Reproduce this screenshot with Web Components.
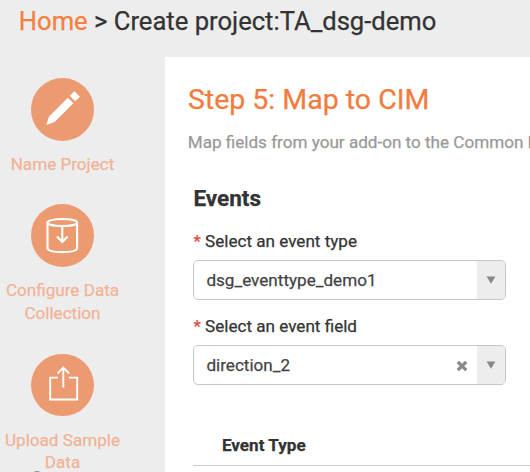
<!DOCTYPE html>
<html lang="en">
<head>
<meta charset="utf-8">
<title>Create project</title>
<style>
html, body { margin: 0; height: 100%; overflow: hidden; }
body { background: #ededed; font-family: Roboto, "Liberation Sans", sans-serif; font-size: 17.1px; color: #333; -webkit-text-stroke: .25px; }
</style>
</head>
<body>
<project-page></project-page>
<script>
function define(name, html) {
  const template = document.createElement('template');
  template.innerHTML = html;
  customElements.define(name, class extends HTMLElement {
    constructor() {
      super();
      this.attachShadow({ mode: 'open' }).appendChild(template.content.cloneNode(true));
    }
  });
}

define('page-crumbs', `
<style>
:host { display: block; box-sizing: border-box; height: 57px; padding: 6px 0 0 18.8px; font-size: 25.6px; line-height: 30px; white-space: nowrap; }
::slotted(a) { color: #f58040; text-decoration: none; }
</style>
<slot></slot>`);

define('wizard-step', `
<style>
:host { display: flex; flex: none; flex-direction: column; align-items: center; width: 125px; color: #f0b496; line-height: 22.6px; text-align: center; }
.disc { width: 62.6px; height: 62.6px; border-radius: 50%; background: #ec9b70; }
.label { margin-top: 12.3px; white-space: nowrap; }
::slotted(svg) { display: block; width: 62.6px; height: 62.6px; }
</style>
<div class="disc"><slot name="icon"></slot></div>
<div class="label"><slot></slot></div>`);

define('step-rail', `
<style>
:host { display: flex; flex-direction: column; position: relative; box-sizing: border-box; width: 165px; padding-top: 21.2px; overflow: hidden; }
::slotted(wizard-step:first-of-type) { height: 126.3px; }
::slotted(wizard-step:nth-of-type(2)) { height: 149.2px; }
.next { position: absolute; left: 33px; top: 414px; width: 8px; height: 8px; border-radius: 50%; background: #8a8a8a; }
</style>
<slot></slot><i class="next"></i>`);

define('select-box', `
<style>
:host { display: flex; box-sizing: border-box; width: 313px; height: 40px; border: 1px solid #c6c6c6; border-radius: 5px; overflow: hidden; background: #fff; color: #444; }
.value { flex: 1; padding-left: 12px; line-height: 38px; }
.arrow { width: 28px; background: #ededed; display: flex; align-items: center; justify-content: center; }
.arrow svg { width: 10px; height: 8px; }
::slotted(svg) { width: 12px; height: 12px; align-self: center; margin: 2px 9.5px 0 0; }
</style>
<span class="value"><slot></slot></span><slot name="clear"></slot>
<span class="arrow"><svg viewBox="0 0 10 8"><path d="M.6 .4h8.8L5 7.8z" fill="#888"/></svg></span>`);

define('form-field', `
<style>
:host { display: block; height: 85px; }
.label { line-height: 22px; height: 30px; }
b { color: #dc4e41; font-weight: 400; }
</style>
<div class="label"><b>*</b> <slot name="label"></slot></div><slot></slot>`);

define('table-head', `
<style>
:host { display: block; padding: 0 0 6.5px 28.5px; border-bottom: 1px solid #ccc; line-height: 25px; font-weight: 700; }
</style>
<slot></slot>`);

define('step-panel', `
<style>
:host { display: block; flex: 1; min-width: 0; box-sizing: border-box; background: #fff; padding-left: 28.4px; overflow: hidden; }
h1 { margin: 26px 0 0 -5.5px; font-size: 28.5px; font-weight: 400; line-height: 34px; color: #f27c3e; }
p { margin: 14px 0 0 -5.7px; line-height: 22px; color: #999; white-space: nowrap; }
h2 { margin: 31px 0 0; font-size: 22.5px; line-height: 28px; }
.fields { padding-top: 18px; }
::slotted(table-head) { margin-top: 33px; }
</style>
<h1><slot name="title"></slot></h1>
<p><slot name="intro"></slot></p>
<h2><slot name="section"></slot></h2>
<div class="fields"><slot></slot></div>
<slot name="table"></slot>`);

define('project-page', `
<style>
:host { display: flex; flex-direction: column; height: 472px; }
main { flex: 1; display: flex; min-height: 0; }
</style>
<page-crumbs><a>Home</a> &gt; Create project:TA_dsg-demo</page-crumbs>
<main>
  <step-rail>
    <wizard-step>
      <svg slot="icon" viewBox="0 0 62.6 62.6"><g transform="translate(15.2 46.9) rotate(-45)" fill="#fff"><path d="M0 0L8 -3.9H34.6V3.9H8z"/><path d="M37.2 -3.9H43.8V3.9H37.2z"/></g></svg>
      Name Project
    </wizard-step>
    <wizard-step>
      <svg slot="icon" viewBox="0 0 62.6 62.6" fill="none" stroke="#fff" stroke-width="2.1"><ellipse cx="31.3" cy="18.5" rx="14.8" ry="3.5"/><path d="M16.5 18.5V44.5C18 49.3 44.6 49.3 46.1 44.5V18.5M31.3 22V38M26 32.5l5.3 5.6 5.3-5.6"/></svg>
      Configure Data<br>Collection
    </wizard-step>
    <wizard-step>
      <svg slot="icon" viewBox="0 0 62.6 62.6" fill="none" stroke="#fff" stroke-width="1.9"><path d="M26.8 23.6H19.2V45.5H46.2V23.6H37.8M32.3 33.5V14M26.5 19.5l5.8-5.8 5.8 5.8"/></svg>
      Upload Sample<br>Data
    </wizard-step>
  </step-rail>
  <step-panel>
    <span slot="title">Step 5: Map to CIM</span>
    <span slot="intro">Map fields from your add-on to the Common I</span>
    <span slot="section">Events</span>
    <form-field><span slot="label">Select an event type</span><select-box>dsg_eventtype_demo1</select-box></form-field>
    <form-field><span slot="label">Select an event field</span><select-box>direction_2<svg slot="clear" viewBox="0 0 12 12"><path d="M1.8 1.8l8.4 8.4M10.2 1.8l-8.4 8.4" stroke="#888" stroke-width="3.2"/></svg></select-box></form-field>
    <table-head slot="table">Event Type</table-head>
  </step-panel>
</main>`);
</script>
</body>
</html>
